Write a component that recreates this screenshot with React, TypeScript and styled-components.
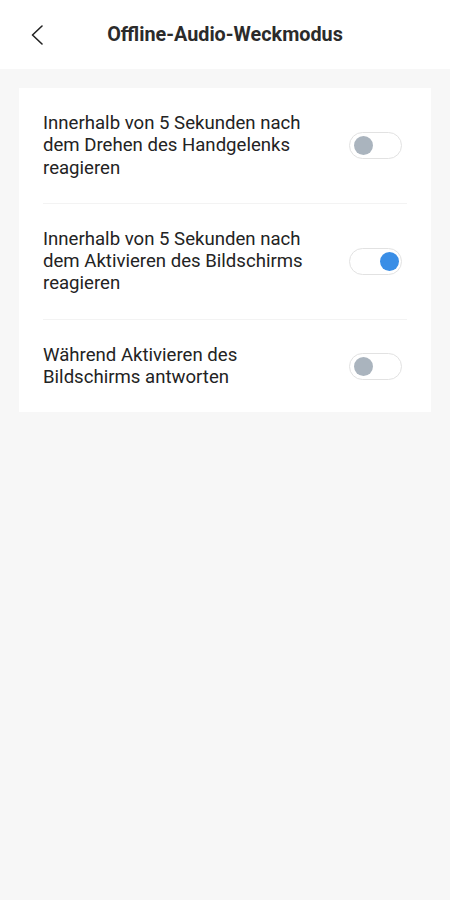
import React, { useState } from 'react'
import styled, { createGlobalStyle } from 'styled-components'

const GlobalStyle = createGlobalStyle`
  html, body {
    margin: 0;
    padding: 0;
    background: #f7f7f7;
    font-family: Roboto, "Noto Sans", sans-serif;
  }
`

const Page = styled.div`
  min-height: 900px;
  background: #f7f7f7;
`

const Header = styled.header`
  height: 69px;
  background: #ffffff;
  display: grid;
  grid-template-columns: 60px 1fr 60px;
  align-items: center;
`

const BackButton = styled.button`
  border: 0;
  background: none;
  padding: 0 0 0 30px;
  height: 40px;
  display: flex;
  align-items: center;
  cursor: pointer;
`

const Title = styled.h1`
  margin: 0;
  text-align: center;
  font-size: 19.8px;
  font-weight: 700;
  color: #2b2b2b;
`

const Card = styled.section`
  margin: 19px 19px 0;
  background: #ffffff;
  padding: 0 24px;
`

const Row = styled.div<{ last?: boolean }>`
  display: flex;
  align-items: center;
  justify-content: space-between;
  gap: 20px;
  padding: 24px 0;
  border-bottom: ${({ last }) => (last ? 'none' : '1px solid #f3f3f3')};
`

const Label = styled.span`
  font-size: 18.6px;
  line-height: 22.3px;
  color: #232323;
  max-width: 272px;
`

const Track = styled.button<{ on: boolean }>`
  flex: none;
  position: relative;
  width: 53px;
  height: 27px;
  margin-right: 5px;
  border-radius: 14px;
  border: 1px solid #e2e2e2;
  background: #ffffff;
  padding: 0;
  cursor: pointer;
  box-sizing: border-box;
`

const Knob = styled.span<{ on: boolean }>`
  position: absolute;
  top: 3px;
  left: ${({ on }) => (on ? '30px' : '4px')};
  width: 19px;
  height: 19px;
  border-radius: 50%;
  background: ${({ on }) => (on ? '#3a8ee6' : '#aab4be')};
`

const Toggle = ({ on, onClick }: { on: boolean; onClick: () => void }) => (
  <Track on={on} onClick={onClick}>
    <Knob on={on} />
  </Track>
)

const items = [
  'Innerhalb von 5 Sekunden nach dem Drehen des Handgelenks reagieren',
  'Innerhalb von 5 Sekunden nach dem Aktivieren des Bildschirms reagieren',
  'Während Aktivieren des Bildschirms antworten',
]

export default function App() {
  const [active, setActive] = useState([false, true, false])

  const flip = (i: number) =>
    setActive(a => a.map((v, j) => (j === i ? !v : v)))

  return (
    <Page>
      <GlobalStyle />
      <Header>
        <BackButton aria-label="Zurück">
          <svg width="14" height="20" viewBox="0 0 14 20" fill="none">
            <path d="M12 1 L2.5 10 L12 19" stroke="#222" strokeWidth="1.6" strokeLinecap="round" strokeLinejoin="round" />
          </svg>
        </BackButton>
        <Title>Offline-Audio-Weckmodus</Title>
        <span />
      </Header>
      <Card>
        {items.map((text, i) => (
          <Row key={i} last={i === items.length - 1}>
            <Label>{text}</Label>
            <Toggle on={active[i]} onClick={() => flip(i)} />
          </Row>
        ))}
      </Card>
    </Page>
  )
}
